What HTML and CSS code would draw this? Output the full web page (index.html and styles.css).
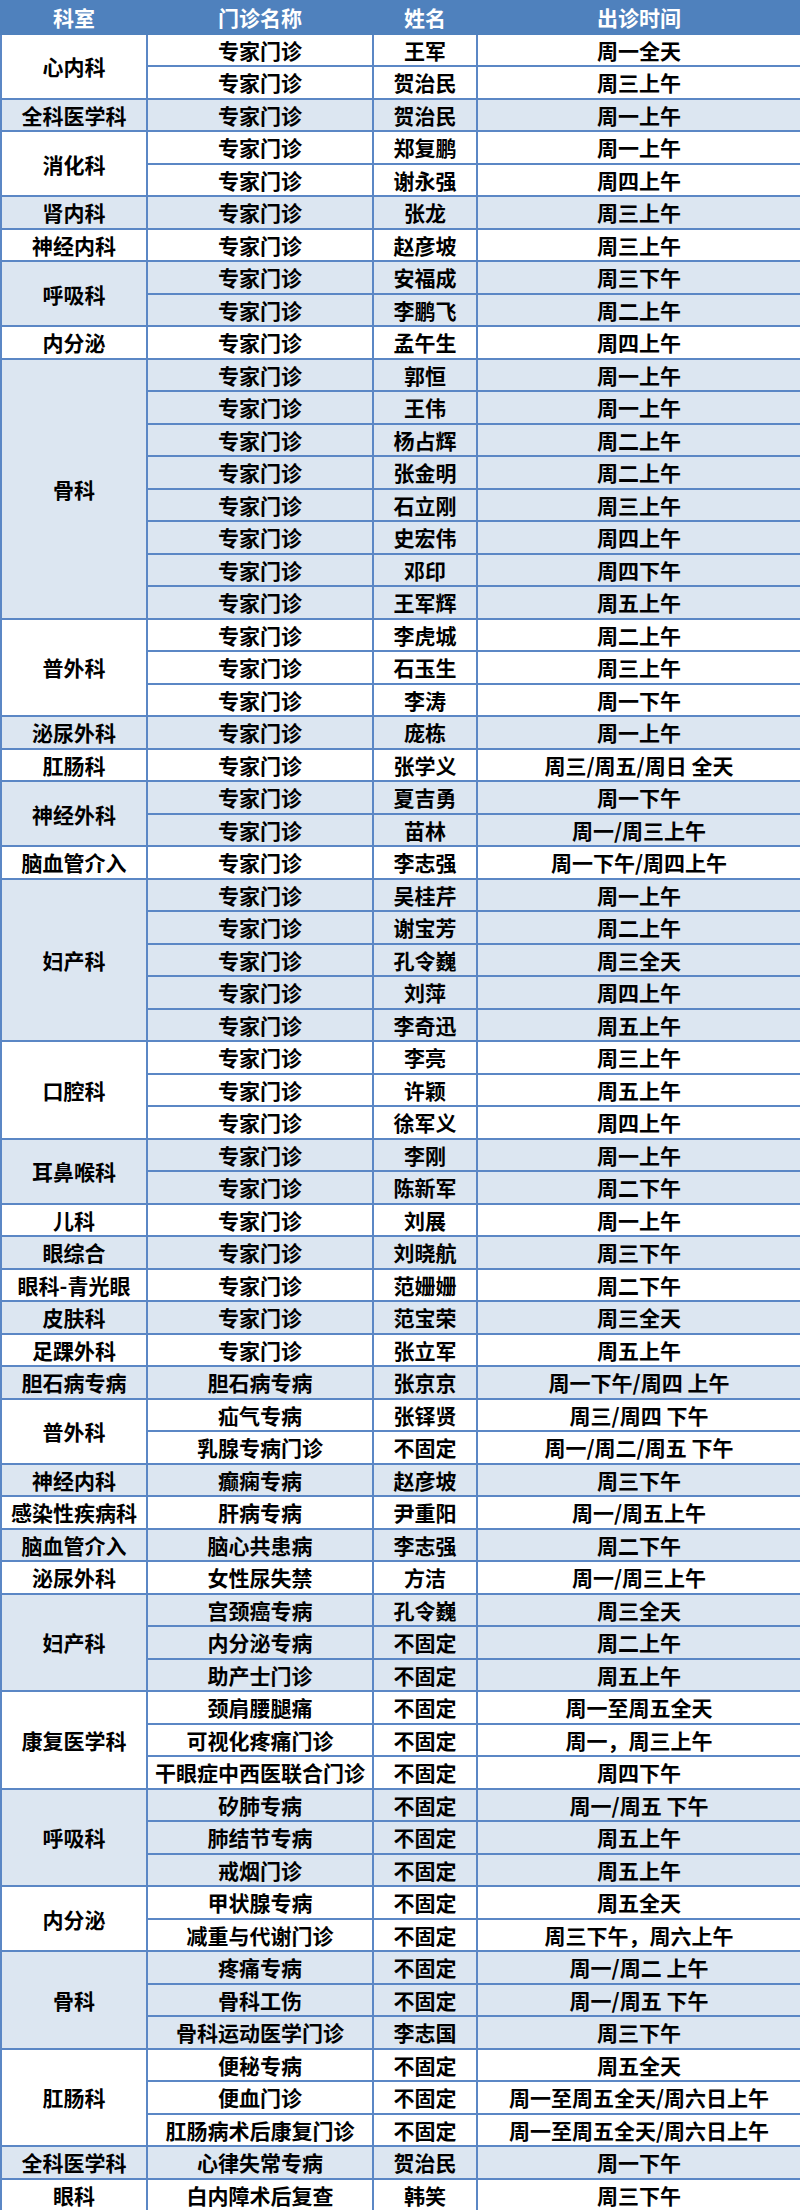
FILE: index.html
```html
<!DOCTYPE html>
<html lang="zh-CN">
<head>
<meta charset="utf-8">
<title>专家门诊出诊时间</title>
<link rel="stylesheet" href="styles.css">
</head>
<body>
<table class="sched">
<colgroup><col class="c1"><col class="c2"><col class="c3"><col class="c4"></colgroup>
<thead>
<tr><th>科室</th><th>门诊名称</th><th>姓名</th><th>出诊时间</th></tr>
</thead>
<tbody>
<tr class="w"><td rowspan="2">心内科</td><td>专家门诊</td><td>王军</td><td>周一全天</td></tr>
<tr class="w"><td>专家门诊</td><td>贺治民</td><td>周三上午</td></tr>
<tr class="b"><td>全科医学科</td><td>专家门诊</td><td>贺治民</td><td>周一上午</td></tr>
<tr class="w"><td rowspan="2">消化科</td><td>专家门诊</td><td>郑复鹏</td><td>周一上午</td></tr>
<tr class="w"><td>专家门诊</td><td>谢永强</td><td>周四上午</td></tr>
<tr class="b"><td>肾内科</td><td>专家门诊</td><td>张龙</td><td>周三上午</td></tr>
<tr class="w"><td>神经内科</td><td>专家门诊</td><td>赵彦坡</td><td>周三上午</td></tr>
<tr class="b"><td rowspan="2">呼吸科</td><td>专家门诊</td><td>安福成</td><td>周三下午</td></tr>
<tr class="b"><td>专家门诊</td><td>李鹏飞</td><td>周二上午</td></tr>
<tr class="w"><td>内分泌</td><td>专家门诊</td><td>孟午生</td><td>周四上午</td></tr>
<tr class="b"><td rowspan="8">骨科</td><td>专家门诊</td><td>郭恒</td><td>周一上午</td></tr>
<tr class="b"><td>专家门诊</td><td>王伟</td><td>周一上午</td></tr>
<tr class="b"><td>专家门诊</td><td>杨占辉</td><td>周二上午</td></tr>
<tr class="b"><td>专家门诊</td><td>张金明</td><td>周二上午</td></tr>
<tr class="b"><td>专家门诊</td><td>石立刚</td><td>周三上午</td></tr>
<tr class="b"><td>专家门诊</td><td>史宏伟</td><td>周四上午</td></tr>
<tr class="b"><td>专家门诊</td><td>邓印</td><td>周四下午</td></tr>
<tr class="b"><td>专家门诊</td><td>王军辉</td><td>周五上午</td></tr>
<tr class="w"><td rowspan="3">普外科</td><td>专家门诊</td><td>李虎城</td><td>周二上午</td></tr>
<tr class="w"><td>专家门诊</td><td>石玉生</td><td>周三上午</td></tr>
<tr class="w"><td>专家门诊</td><td>李涛</td><td>周一下午</td></tr>
<tr class="b"><td>泌尿外科</td><td>专家门诊</td><td>庞栋</td><td>周一上午</td></tr>
<tr class="w"><td>肛肠科</td><td>专家门诊</td><td>张学义</td><td>周三/周五/周日 全天</td></tr>
<tr class="b"><td rowspan="2">神经外科</td><td>专家门诊</td><td>夏吉勇</td><td>周一下午</td></tr>
<tr class="b"><td>专家门诊</td><td>苗林</td><td>周一/周三上午</td></tr>
<tr class="w"><td>脑血管介入</td><td>专家门诊</td><td>李志强</td><td>周一下午/周四上午</td></tr>
<tr class="b"><td rowspan="5">妇产科</td><td>专家门诊</td><td>吴桂芹</td><td>周一上午</td></tr>
<tr class="b"><td>专家门诊</td><td>谢宝芳</td><td>周二上午</td></tr>
<tr class="b"><td>专家门诊</td><td>孔令巍</td><td>周三全天</td></tr>
<tr class="b"><td>专家门诊</td><td>刘萍</td><td>周四上午</td></tr>
<tr class="b"><td>专家门诊</td><td>李奇迅</td><td>周五上午</td></tr>
<tr class="w"><td rowspan="3">口腔科</td><td>专家门诊</td><td>李亮</td><td>周三上午</td></tr>
<tr class="w"><td>专家门诊</td><td>许颖</td><td>周五上午</td></tr>
<tr class="w"><td>专家门诊</td><td>徐军义</td><td>周四上午</td></tr>
<tr class="b"><td rowspan="2">耳鼻喉科</td><td>专家门诊</td><td>李刚</td><td>周一上午</td></tr>
<tr class="b"><td>专家门诊</td><td>陈新军</td><td>周二下午</td></tr>
<tr class="w"><td>儿科</td><td>专家门诊</td><td>刘展</td><td>周一上午</td></tr>
<tr class="b"><td>眼综合</td><td>专家门诊</td><td>刘晓航</td><td>周三下午</td></tr>
<tr class="w"><td>眼科-青光眼</td><td>专家门诊</td><td>范姗姗</td><td>周二下午</td></tr>
<tr class="b"><td>皮肤科</td><td>专家门诊</td><td>范宝荣</td><td>周三全天</td></tr>
<tr class="w"><td>足踝外科</td><td>专家门诊</td><td>张立军</td><td>周五上午</td></tr>
<tr class="b"><td>胆石病专病</td><td>胆石病专病</td><td>张京京</td><td>周一下午/周四 上午</td></tr>
<tr class="w"><td rowspan="2">普外科</td><td>疝气专病</td><td>张铎贤</td><td>周三/周四 下午</td></tr>
<tr class="w"><td>乳腺专病门诊</td><td>不固定</td><td>周一/周二/周五 下午</td></tr>
<tr class="b"><td>神经内科</td><td>癫痫专病</td><td>赵彦坡</td><td>周三下午</td></tr>
<tr class="w"><td>感染性疾病科</td><td>肝病专病</td><td>尹重阳</td><td>周一/周五上午</td></tr>
<tr class="b"><td>脑血管介入</td><td>脑心共患病</td><td>李志强</td><td>周二下午</td></tr>
<tr class="w"><td>泌尿外科</td><td>女性尿失禁</td><td>方洁</td><td>周一/周三上午</td></tr>
<tr class="b"><td rowspan="3">妇产科</td><td>宫颈癌专病</td><td>孔令巍</td><td>周三全天</td></tr>
<tr class="b"><td>内分泌专病</td><td>不固定</td><td>周二上午</td></tr>
<tr class="b"><td>助产士门诊</td><td>不固定</td><td>周五上午</td></tr>
<tr class="w"><td rowspan="3">康复医学科</td><td>颈肩腰腿痛</td><td>不固定</td><td>周一至周五全天</td></tr>
<tr class="w"><td>可视化疼痛门诊</td><td>不固定</td><td>周一，周三上午</td></tr>
<tr class="w"><td>干眼症中西医联合门诊</td><td>不固定</td><td>周四下午</td></tr>
<tr class="b"><td rowspan="3">呼吸科</td><td>矽肺专病</td><td>不固定</td><td>周一/周五 下午</td></tr>
<tr class="b"><td>肺结节专病</td><td>不固定</td><td>周五上午</td></tr>
<tr class="b"><td>戒烟门诊</td><td>不固定</td><td>周五上午</td></tr>
<tr class="w"><td rowspan="2">内分泌</td><td>甲状腺专病</td><td>不固定</td><td>周五全天</td></tr>
<tr class="w"><td>减重与代谢门诊</td><td>不固定</td><td>周三下午，周六上午</td></tr>
<tr class="b"><td rowspan="3">骨科</td><td>疼痛专病</td><td>不固定</td><td>周一/周二 上午</td></tr>
<tr class="b"><td>骨科工伤</td><td>不固定</td><td>周一/周五 下午</td></tr>
<tr class="b"><td>骨科运动医学门诊</td><td>李志国</td><td>周三下午</td></tr>
<tr class="w"><td rowspan="3">肛肠科</td><td>便秘专病</td><td>不固定</td><td>周五全天</td></tr>
<tr class="w"><td>便血门诊</td><td>不固定</td><td>周一至周五全天/周六日上午</td></tr>
<tr class="w"><td>肛肠病术后康复门诊</td><td>不固定</td><td>周一至周五全天/周六日上午</td></tr>
<tr class="b"><td>全科医学科</td><td>心律失常专病</td><td>贺治民</td><td>周一下午</td></tr>
<tr class="w"><td>眼科</td><td>白内障术后复查</td><td>韩笑</td><td>周三下午</td></tr>
</tbody>
</table>
</body>
</html>
```
FILE: styles.css
```css
html, body {
  margin: 0;
  padding: 0;
  background: #ffffff;
}
.sched {
  width: 800px;
  table-layout: fixed;
  border-collapse: collapse;
  font-family: "Noto Sans CJK SC", "Microsoft YaHei", sans-serif;
  font-weight: bold;
  font-size: 21px;
  color: #000000;
}
.c1 { width: 146px; }
.c2 { width: 226px; }
.c3 { width: 104px; }
.c4 { width: 324px; }
.sched tr { height: 32.5px; }
.sched th,
.sched td {
  padding: 0;
  border: 2px solid #5b87c5;
  text-align: center;
  vertical-align: middle;
  line-height: 28px;
  white-space: nowrap;
  overflow: hidden;
}
.sched th {
  background: #4f81bd;
  color: #ffffff;
  border-color: #4f81bd;
  font-weight: bold;
}
.sched tr.w td { background: #ffffff; }
.sched tr.b td { background: #dce6f1; }
```
